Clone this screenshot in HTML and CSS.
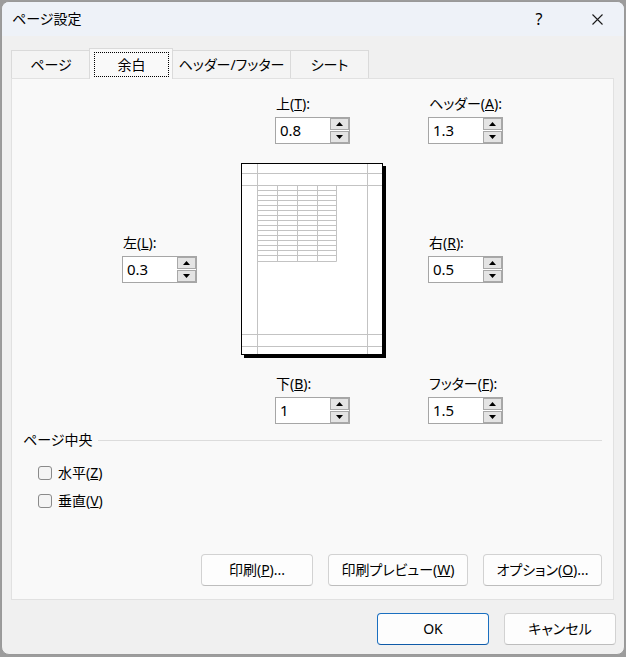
FILE: index.html
```html
<!DOCTYPE html>
<html lang="ja">
<head>
<meta charset="utf-8">
<title>ページ設定</title>
<link rel="stylesheet" href="styles.css">
</head>
<body>
<div class="window">
  <div class="titlebar">
    <span class="title">ページ設定</span>
    <span class="help">?</span>
    <span class="close"><svg width="11" height="11" viewBox="0 0 11 11"><path d="M0.5 0.5 L10.5 10.5 M10.5 0.5 L0.5 10.5" stroke="#1a1a1a" stroke-width="1.1" fill="none"/></svg></span>
  </div>
  <div class="tabs">
    <div class="tab tab-page">ページ</div>
    <div class="tab tab-margin selected"><span class="focus">余白</span></div>
    <div class="tab tab-hf">ヘッダー/フッター</div>
    <div class="tab tab-sheet">シート</div>
  </div>
  <div class="panel">
    <div class="margins">
      <div class="group g-top">
        <div class="label">上(<u>T</u>):</div>
        <div class="spin"><span class="spin-value">0.8</span><span class="spin-btns"><span class="spin-btn"><svg width="7" height="4" viewBox="0 0 7 4"><polygon points="0,4 3.5,0 7,4" fill="#000"/></svg></span><span class="spin-btn"><svg width="7" height="4" viewBox="0 0 7 4"><polygon points="0,0 7,0 3.5,4" fill="#000"/></svg></span></span></div>
      </div>
      <div class="group g-header">
        <div class="label">ヘッダー(<u>A</u>):</div>
        <div class="spin"><span class="spin-value">1.3</span><span class="spin-btns"><span class="spin-btn"><svg width="7" height="4" viewBox="0 0 7 4"><polygon points="0,4 3.5,0 7,4" fill="#000"/></svg></span><span class="spin-btn"><svg width="7" height="4" viewBox="0 0 7 4"><polygon points="0,0 7,0 3.5,4" fill="#000"/></svg></span></span></div>
      </div>
      <div class="group g-left">
        <div class="label">左(<u>L</u>):</div>
        <div class="spin"><span class="spin-value">0.3</span><span class="spin-btns"><span class="spin-btn"><svg width="7" height="4" viewBox="0 0 7 4"><polygon points="0,4 3.5,0 7,4" fill="#000"/></svg></span><span class="spin-btn"><svg width="7" height="4" viewBox="0 0 7 4"><polygon points="0,0 7,0 3.5,4" fill="#000"/></svg></span></span></div>
      </div>
      <div class="preview">
        <svg width="145" height="195" viewBox="0 0 145 195">
          <rect x="3" y="3" width="142" height="192" fill="#000"/>
          <rect x="0.5" y="0.5" width="141" height="191" fill="#fff" stroke="#000" stroke-width="1"/>
          <g stroke="#c3c3c3" stroke-width="1" fill="none">
            <path d="M16.5 1 V191 M126.5 1 V191 M1 10.5 H141 M1 22.5 H141 M1 171.5 H141 M1 183.5 H141"/>
            <path d="M36.5 22.5 V98.5 M56.5 22.5 V98.5 M76.5 22.5 V98.5 M95.5 22.5 V98.5"/>
            <path d="M16.5 27.5 H95.5 M16.5 32.5 H95.5 M16.5 37.5 H95.5 M16.5 42.5 H95.5 M16.5 47.5 H95.5 M16.5 52.5 H95.5 M16.5 57.5 H95.5 M16.5 62.5 H95.5 M16.5 67.5 H95.5 M16.5 72.5 H95.5 M16.5 77.5 H95.5 M16.5 82.5 H95.5 M16.5 87.5 H95.5 M16.5 92.5 H95.5 M16.5 98.5 H95.5"/>
          </g>
        </svg>
      </div>
      <div class="group g-right">
        <div class="label">右(<u>R</u>):</div>
        <div class="spin"><span class="spin-value">0.5</span><span class="spin-btns"><span class="spin-btn"><svg width="7" height="4" viewBox="0 0 7 4"><polygon points="0,4 3.5,0 7,4" fill="#000"/></svg></span><span class="spin-btn"><svg width="7" height="4" viewBox="0 0 7 4"><polygon points="0,0 7,0 3.5,4" fill="#000"/></svg></span></span></div>
      </div>
      <div class="group g-bottom">
        <div class="label">下(<u>B</u>):</div>
        <div class="spin"><span class="spin-value">1</span><span class="spin-btns"><span class="spin-btn"><svg width="7" height="4" viewBox="0 0 7 4"><polygon points="0,4 3.5,0 7,4" fill="#000"/></svg></span><span class="spin-btn"><svg width="7" height="4" viewBox="0 0 7 4"><polygon points="0,0 7,0 3.5,4" fill="#000"/></svg></span></span></div>
      </div>
      <div class="group g-footer">
        <div class="label">フッター(<u>F</u>):</div>
        <div class="spin"><span class="spin-value">1.5</span><span class="spin-btns"><span class="spin-btn"><svg width="7" height="4" viewBox="0 0 7 4"><polygon points="0,4 3.5,0 7,4" fill="#000"/></svg></span><span class="spin-btn"><svg width="7" height="4" viewBox="0 0 7 4"><polygon points="0,0 7,0 3.5,4" fill="#000"/></svg></span></span></div>
      </div>
    </div>
    <div class="section">
      <span class="section-title">ページ中央</span>
      <span class="section-line"></span>
    </div>
    <label class="check check-first"><span class="box"></span>水平(<u>Z</u>)</label>
    <label class="check"><span class="box"></span>垂直(<u>V</u>)</label>
    <div class="panel-actions">
      <button class="btn btn-print">印刷(<u>P</u>)...</button>
      <button class="btn btn-preview">印刷プレビュー(<u>W</u>)</button>
      <button class="btn btn-options">オプション(<u>O</u>)...</button>
    </div>
  </div>
  <div class="dialog-actions">
    <button class="btn btn-ok">OK</button>
    <button class="btn btn-cancel">キャンセル</button>
  </div>
</div>
</body>
</html>
```
FILE: styles.css
```css
* { box-sizing: border-box; }
html, body { margin: 0; padding: 0; }
body {
  width: 626px;
  height: 657px;
  padding: 1px;
  background: #9c9c9c;
  font-family: "Noto Sans", "Noto Sans CJK JP", sans-serif;
  font-size: 14px;
  color: #000;
  font-feature-settings: "palt";
  overflow: hidden;
}
u { text-decoration: underline; text-underline-offset: 1px; }

.window {
  width: 624px;
  height: 654px;
  background: #f0f0f0;
  border: 1px solid #999999;
  border-radius: 8px;
  overflow: hidden;
  display: flex;
  flex-direction: column;
}

.titlebar {
  height: 34px;
  flex: none;
  background: #eef2f8;
  display: flex;
  align-items: center;
  padding-left: 10px;
}
.title { flex: 1; font-size: 14px; line-height: 20px; }
.help { width: 40px; text-align: center; font-size: 16px; line-height: 20px; }
.close {
  width: 46px;
  margin-left: 15px;
  margin-right: 4px;
  display: flex;
  justify-content: center;
  align-items: center;
}

.tabs {
  height: 42px;
  flex: none;
  display: flex;
  align-items: flex-end;
  padding-left: 9px;
}
.tab {
  height: 28px;
  background: #f4f4f4;
  border: 1px solid #dadada;
  border-bottom: none;
  display: flex;
  align-items: center;
  justify-content: center;
  line-height: 20px;
}
.tab-page { width: 80px; }
.tab-margin { width: 84px; margin-left: -2px; }
.tab-hf { width: 119px; margin-left: -1px; }
.tab-sheet { width: 79px; margin-left: -1px; }
.tab.selected {
  height: 31px;
  margin-bottom: -1px;
  background: #f9f9f9;
  position: relative;
  z-index: 1;
  align-items: flex-start;
  justify-content: flex-start;
}
.focus {
  display: flex;
  align-items: center;
  justify-content: center;
  width: 75px;
  height: 25px;
  margin: 3px 0 0 4px;
  border: 1px dotted #000;
}

.panel {
  height: 522px;
  flex: none;
  margin: 0 10px 0 9px;
  background: #f9f9f9;
  border: 1px solid #e1e1e1;
  display: flex;
  flex-direction: column;
}

.margins {
  display: grid;
  grid-template-columns: 119px 187px 75px;
  grid-template-rows: 50px 19px 195px 16px auto;
  padding: 15px 0 0 110px;
}
.group { display: flex; flex-direction: column; gap: 3px; }
.label { line-height: 20px; height: 20px; padding-left: 1px; white-space: nowrap; }
.g-top { grid-column: 2; grid-row: 1; margin-left: 34px; }
.g-header { grid-column: 3; grid-row: 1; }
.g-left { grid-column: 1; grid-row: 3; margin-top: 70px; align-self: start; }
.preview { grid-column: 2; grid-row: 3; display: flex; }
.preview svg { display: block; }
.g-right { grid-column: 3; grid-row: 3; margin-top: 70px; align-self: start; }
.g-bottom { grid-column: 2; grid-row: 5; margin-left: 34px; }
.g-footer { grid-column: 3; grid-row: 5; }

.spin {
  width: 75px;
  height: 27px;
  background: #fff;
  border: 1px solid #a6a6a6;
  display: flex;
}
.spin-value {
  flex: 1;
  padding-left: 4px;
  line-height: 25px;
  font-size: 15px;
}
.spin-btns {
  width: 19px;
  display: flex;
  flex-direction: column;
  gap: 1px;
}
.spin-btn {
  flex: 1;
  background: #e4e4e4;
  border: 1px solid #a8a8a8;
  display: flex;
  align-items: center;
  justify-content: center;
}
.spin-btn svg { display: block; }

.section {
  display: flex;
  align-items: center;
  margin-top: 6px;
  padding: 0 11px 0 11px;
  height: 20px;
}
.section-title { line-height: 20px; }
.section-line {
  flex: 1;
  height: 1px;
  background: #dcdcdc;
  margin-left: 6px;
}

.check {
  display: flex;
  align-items: center;
  height: 20px;
  line-height: 20px;
  padding-left: 26px;
  margin-top: 8px;
}
.check-first { margin-top: 13px; }
.box {
  width: 14px;
  height: 14px;
  border: 1px solid #8a8a8a;
  border-radius: 3px;
  background: #f4f4f4;
  margin-right: 6px;
}

.panel-actions {
  margin-top: auto;
  margin-bottom: 13px;
  padding-right: 11px;
  display: flex;
  justify-content: flex-end;
  gap: 15px;
}
.btn {
  height: 32px;
  background: #fdfdfd;
  border: 1px solid #d2d2d2;
  border-bottom-color: #bdbdbd;
  border-radius: 4px;
  font: inherit;
  font-size: 14px;
  color: #000;
  padding: 0;
  line-height: 20px;
}
.btn-print { width: 112px; }
.btn-preview { width: 140px; }
.btn-options { width: 119px; }

.dialog-actions {
  margin-top: 13px;
  padding-right: 8px;
  display: flex;
  justify-content: flex-end;
  gap: 15px;
}
.btn-ok { width: 112px; border-color: #1a6fc0; border-bottom-color: #0f5aa8; }
.btn-cancel { width: 112px; }
```
